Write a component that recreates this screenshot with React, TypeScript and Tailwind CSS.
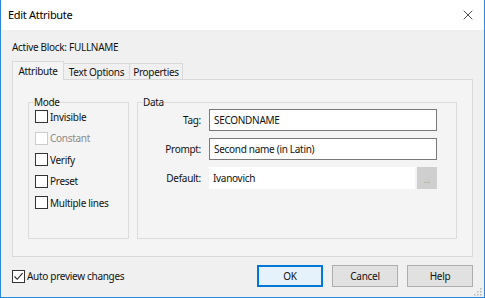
import { X } from 'lucide-react'

const font = { fontFamily: '"Noto Sans", "Open Sans", sans-serif' }

function CheckBox({ label, checked = false, disabled = false }: { label: string; checked?: boolean; disabled?: boolean }) {
  return (
    <div className="flex h-[21.5px] items-center">
      <span
        className={`flex h-[13px] w-[13px] shrink-0 items-center justify-center border bg-white ${
          disabled ? 'border-[#cccccc]' : 'border-[#333333]'
        }`}
      >
        {checked && (
          <svg viewBox="0 0 11 11" className="h-[11px] w-[11px]">
            <path d="M1.5 5.5 L4.2 8.3 L9.6 2.2" fill="none" stroke="#222" strokeWidth="1.1" />
          </svg>
        )}
      </span>
      <span className={`ml-[2px] ${disabled ? 'text-[#8a8a8a]' : 'text-[#111]'}`}>{label}</span>
    </div>
  )
}

function Field({ label, value, browse = false }: { label: string; value: string; browse?: boolean }) {
  return (
    <div className="flex h-[22px] items-center">
      <span className="w-[59px] pr-[1px] text-right text-[#111]">{label}</span>
      <div className="ml-[7px] flex h-full flex-1">
        {browse ? (
          <>
            <div className="flex flex-1 items-center bg-white px-[4px] text-[#111]">{value}</div>
            <div className="ml-[2px] flex w-[20px] items-center justify-center bg-[#cfcfcf] pt-[3px] text-[9px] leading-none text-[#a0a0a0]">
              ...
            </div>
          </>
        ) : (
          <div className="flex flex-1 items-center border border-[#7a7a7a] bg-white px-[4px] text-[#111]">{value}</div>
        )}
      </div>
    </div>
  )
}

export default function App() {
  return (
    <div
      style={font}
      className="flex h-[298px] w-[485px] flex-col overflow-hidden border-x border-b border-[#2b88d8] bg-[#f0f0f0] text-[10px] leading-[16px] tracking-[-0.3px] text-[#111]"
    >
      <div className="flex h-[30px] shrink-0 items-center justify-between bg-white pl-[7px] pr-[8px]">
        <span className="text-[11px] text-[#000]">Edit Attribute</span>
        <X className="h-[16px] w-[16px] text-[#222]" strokeWidth={1.2} />
      </div>

      <div className="flex flex-1 flex-col px-[11px] pt-[9px]">
        <div className="h-[16px]">Active Block: FULLNAME</div>

        <div className="mt-[6px] flex h-[19px] items-end">
          <div className="relative z-10 flex h-[19px] w-[52px] items-center justify-center border-x border-t border-[#d9d9d9] bg-[#f4f4f4]">
            Attribute
          </div>
          <div className="flex h-[17px] w-[66px] items-center justify-center border-t border-r border-[#d9d9d9] bg-[#f0f0f0]">
            Text Options
          </div>
          <div className="flex h-[17px] w-[53px] items-center justify-center border-t border-r border-[#d9d9d9] bg-[#f0f0f0]">
            Properties
          </div>
        </div>

        <div className="-mt-px flex h-[178px] gap-[8px] border border-[#d9d9d9] bg-[#f4f4f4] pl-[15px] pr-[15px] pt-[15px]">
          <fieldset className="h-[144px] w-[101px] border border-[#dcdcdc] pl-[6px]">
            <legend className="-ml-[1px] px-0 leading-[14px]">Mode</legend>
            <div className="-mt-[3px]">
              <CheckBox label="Invisible" />
              <CheckBox label="Constant" disabled />
              <CheckBox label="Verify" />
              <CheckBox label="Preset" />
              <CheckBox label="Multiple lines" />
            </div>
          </fieldset>

          <fieldset className="h-[144px] flex-1 border border-[#dcdcdc] pl-[5px] pr-[19px]">
            <legend className="leading-[14px]">Data</legend>
            <div className="flex flex-col gap-[7px]">
              <Field label="Tag:" value="SECONDNAME" />
              <Field label="Prompt:" value="Second name (in Latin)" />
              <Field label="Default:" value="Ivanovich" browse />
            </div>
          </fieldset>
        </div>

        <div className="mt-[8px] flex h-[22px] items-center">
          <CheckBox label="Auto preview changes" checked />
          <div className="ml-auto flex gap-[9px]">
            <button className="h-[22px] w-[66px] border-2 border-[#0078d7] bg-[#e5f1fb]">OK</button>
            <button className="h-[22px] w-[66px] border border-[#adadad] bg-[#e1e1e1]">Cancel</button>
            <button className="h-[22px] w-[66px] border border-[#adadad] bg-[#e1e1e1]">Help</button>
          </div>
        </div>

        <div className="mt-auto flex justify-end pb-[1px]">
          <svg viewBox="0 0 8 8" className="-mr-[9px] h-[8px] w-[8px]">
            <rect x="6" y="0" width="1.5" height="1.5" fill="#b8b8b8" />
            <rect x="3" y="3" width="1.5" height="1.5" fill="#b8b8b8" />
            <rect x="6" y="3" width="1.5" height="1.5" fill="#b8b8b8" />
            <rect x="0" y="6" width="1.5" height="1.5" fill="#b8b8b8" />
            <rect x="3" y="6" width="1.5" height="1.5" fill="#b8b8b8" />
            <rect x="6" y="6" width="1.5" height="1.5" fill="#b8b8b8" />
          </svg>
        </div>
      </div>
    </div>
  )
}
